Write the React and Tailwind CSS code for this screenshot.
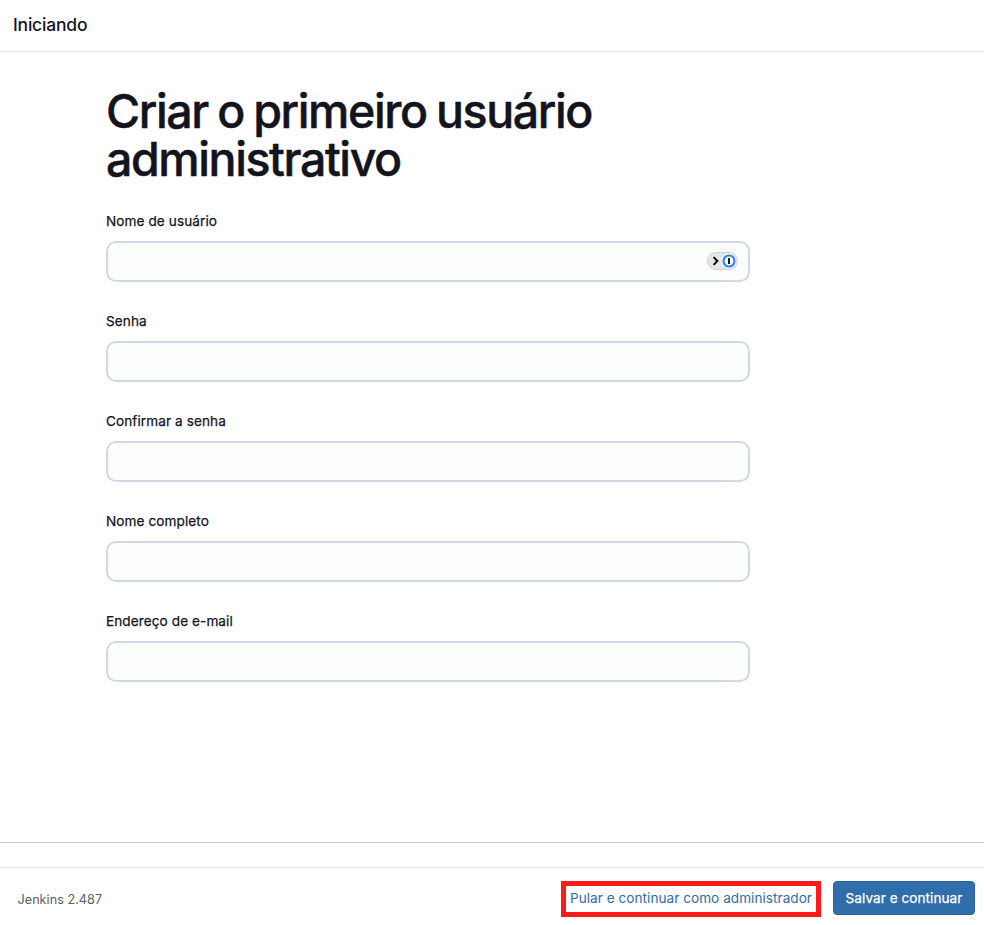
const fields = ['Nome de usuário', 'Senha', 'Confirmar a senha', 'Nome completo', 'Endereço de e-mail'];

function PasswordBadge() {
  return (
    <svg width="31" height="18" viewBox="0 0 31 18" fill="none">
      <rect x="0.5" y="0.5" width="30" height="17" rx="8.5" fill="#e6e6e6" stroke="#d0d0d0" />
      <path d="M6.6 5.2l3.8 3.8-3.8 3.8" stroke="#000" strokeWidth="1.9" />
      <circle cx="22" cy="9" r="7.4" fill="#fff" />
      <circle cx="22" cy="9" r="5.5" fill="#fff" stroke="#2186f5" strokeWidth="2.1" />
      <rect x="21" y="6" width="2" height="6" rx="0.5" fill="#111" />
    </svg>
  );
}

export default function App() {
  return (
    <div className="flex h-[925px] w-[984px] flex-col overflow-hidden bg-white font-['Inter',sans-serif] text-[#14141f]">
      <header className="h-[52px] border-b border-[#e0e0e0] pl-[13px] text-[17.5px] font-medium leading-[50px] tracking-[-0.2px]">
        Iniciando
      </header>
      <main className="h-[791px] border-b border-[#c4c4c4] pl-[106px] pt-[35px]">
        <h1 className="text-[46.5px] font-medium leading-[48px] tracking-[-1.4px] [-webkit-text-stroke:0.5px_#14141f] [word-spacing:-1.6px]">
          Criar o primeiro usuário
          <br />
          administrativo
        </h1>
        <form className="mt-[28px] flex w-[644px] flex-col gap-[29px]">
          {fields.map((label, i) => (
            <div key={label}>
              <label className="block h-[30px] text-[13.6px] leading-[20px] tracking-[0.08px] [-webkit-text-stroke:0.25px_#14141f]">{label}</label>
              <div className="flex h-[41px] items-start justify-end rounded-[10px] border-2 border-[#d1d9e4] bg-[#fcfefe] pr-[10px] pt-[9px]">
                {i === 0 && <PasswordBadge />}
              </div>
            </div>
          ))}
        </form>
      </main>
      <footer className="mt-[24px] flex h-[58px] items-start border-t border-[#e0e0e0] pl-[17.5px] pr-[9px] pt-[13px]">
        <span className="mt-[9px] text-[12.6px] leading-[20px] tracking-[0.05px] text-[#5c5c64]">Jenkins 2.487</span>
        <button className="ml-auto h-[36px] w-[260px] whitespace-nowrap border-[5px] border-[#ff1a1a] pb-[2px] text-[13.6px] leading-[24px] tracking-[0.03px] text-[#2f6da8]">
          Pular e continuar como administrador
        </button>
        <button className="ml-[12px] h-[34px] w-[142px] whitespace-nowrap rounded-[4px] border border-[#2a6398] bg-[#306eab] pt-[1px] text-[13.6px] tracking-[0.04px] text-white [-webkit-text-stroke:0.25px_#fff]">
          Salvar e continuar
        </button>
      </footer>
    </div>
  );
}
